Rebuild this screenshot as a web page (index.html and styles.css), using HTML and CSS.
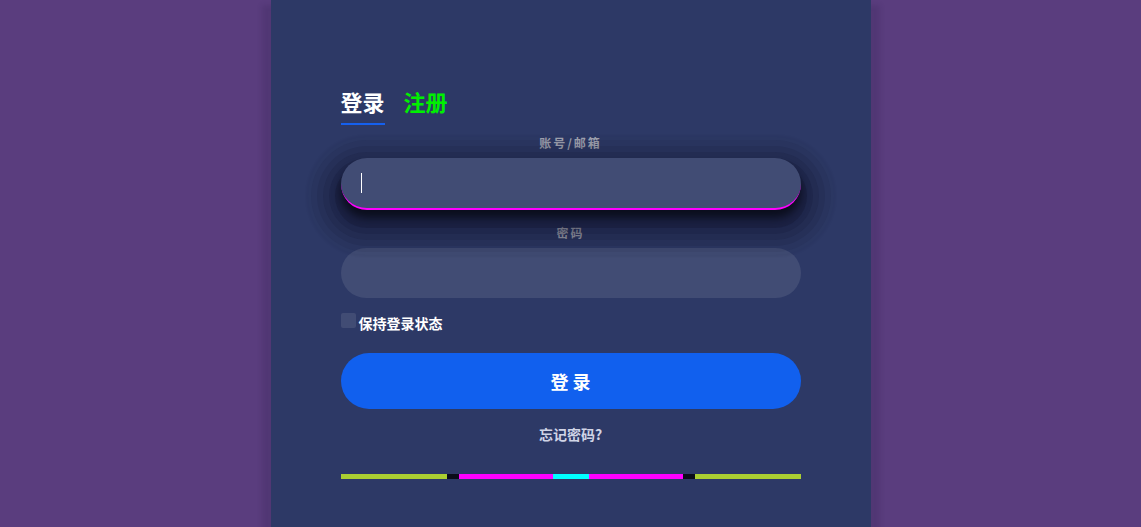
FILE: index.html
```html
<!DOCTYPE html>
<html lang="zh">
<head>
<meta charset="utf-8">
<title>登录</title>
<link rel="stylesheet" href="styles.css">
</head>
<body>
<div class="page">
  <div class="card">
    <div class="tabs">
      <span class="tab active">登录</span>
      <span class="tab other">注册</span>
    </div>
    <form class="form">
      <label class="label" for="user">账号/邮箱</label>
      <div class="field-wrap">
        <input class="field focused" id="user" type="text">
        <span class="caret"></span>
      </div>
      <label class="label second" for="pwd">密码</label>
      <input class="field" id="pwd" type="password">
      <label class="remember"><span class="box"></span>保持登录状态</label>
      <button class="submit" type="button">登录</button>
      <a class="forgot" href="#">忘记密码?</a>
      <div class="stripe"></div>
    </form>
  </div>
</div>
</body>
</html>
```
FILE: styles.css
```css
html, body {
  margin: 0;
  height: 100%;
  background: #5a3d7e;
  overflow: hidden;
}
body {
  font-family: "Noto Sans CJK SC", "Noto Sans", sans-serif;
}
.page {
  display: flex;
  justify-content: center;
  height: 100%;
}
.card {
  width: 600px;
  box-sizing: border-box;
  background: #2d3966;
  padding: 83px 70px 0;
  box-shadow: 0 14px 5px 9px rgba(40, 25, 70, 0.16);
}
.tabs {
  display: flex;
  gap: 19px;
}
.tab {
  font-size: 22px;
  font-weight: 700;
  line-height: 36px;
  padding-bottom: 4px;
}
.tab.active {
  color: #ffffff;
  border-bottom: 2px solid #1560ee;
}
.tab.other {
  color: #00f000;
}
.form {
  display: flex;
  flex-direction: column;
}
.label {
  text-align: center;
  color: #a4a7b4;
  font-size: 12px;
  font-weight: 700;
  letter-spacing: 2px;
  line-height: 17px;
  margin-top: 9px;
  margin-bottom: 7px;
}
.label.second {
  margin-top: 14px;
}
.field-wrap {
  position: relative;
  display: flex;
  flex-direction: column;
  z-index: 1;
}
.field {
  height: 50px;
  box-sizing: border-box;
  border: none;
  border-radius: 26px;
  background: #414c74;
  color: #fff;
  font-size: 16px;
  padding: 0 20px;
  outline: none;
  font-family: inherit;
}
.field.focused {
  height: 52px;
  border-bottom: 2px solid #ff00ff;
  box-shadow:
    0 8px 8px rgba(8, 10, 22, 0.85),
    0 12px 0 6px rgba(10, 12, 30, 0.18),
    0 12px 0 12px rgba(10, 12, 30, 0.12),
    0 12px 0 18px rgba(10, 12, 30, 0.1),
    0 12px 0 24px rgba(10, 12, 30, 0.08),
    0 12px 0 30px rgba(10, 12, 30, 0.06),
    0 12px 2px 35px rgba(10, 12, 30, 0.05);
}
.caret {
  position: absolute;
  left: 20px;
  top: 15px;
  width: 1px;
  height: 20px;
  background: #ffffff;
}
.remember {
  display: flex;
  align-items: center;
  gap: 3px;
  color: #fff;
  font-size: 14px;
  font-weight: 700;
  margin-top: 15px;
  line-height: 20px;
}
.box {
  width: 15px;
  height: 15px;
  border-radius: 2px;
  background: #414c74;
  align-self: flex-start;
}
.submit {
  margin-top: 20px;
  height: 56px;
  border: none;
  border-radius: 28px;
  background: #1160ee;
  color: #fff;
  font-family: inherit;
  font-size: 18px;
  font-weight: 700;
  letter-spacing: 4px;
  padding: 0 0 0 4px;
}
.forgot {
  align-self: center;
  margin-top: 15px;
  color: #d0d4e6;
  font-size: 14px;
  font-weight: 700;
  text-decoration: none;
  line-height: 20px;
}
.stripe {
  margin-top: 30px;
  height: 5px;
  background: linear-gradient(to right,
    #abcf32 0 106px, #0b0d1a 106px 118px,
    #ff00ff 118px 212px, #00ffff 212px 248px,
    #ff00ff 248px 342px, #0b0d1a 342px 354px,
    #abcf32 354px 460px);
}
```
